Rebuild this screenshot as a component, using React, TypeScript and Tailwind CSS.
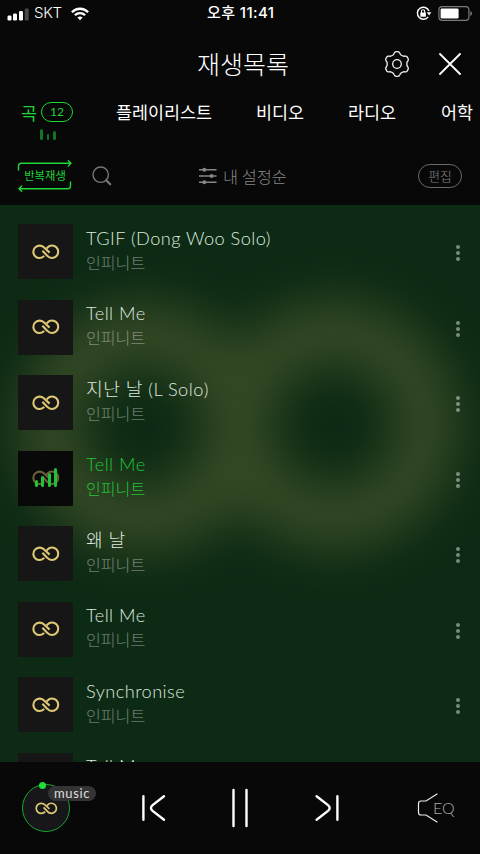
import React from "react";

const latin = "font-[Lato,'Noto_Sans_CJK_KR',sans-serif]";
const korean = "font-['Noto_Sans_CJK_KR',sans-serif]";
const system = "font-[Inter,'Noto_Sans_CJK_KR',sans-serif]";

type Track = { title: string; playing?: boolean };

const tracks: Track[] = [
  { title: "TGIF (Dong Woo Solo)" },
  { title: "Tell Me" },
  { title: "지난 날 (L Solo)" },
  { title: "Tell Me", playing: true },
  { title: "왜 날" },
  { title: "Tell Me" },
  { title: "Synchronise" },
  { title: "Tell Me" },
];

// Outline of a six-lobed cog centred on (14, 14), with one lobe pointing up.
const cogPath =
  "M" +
  Array.from({ length: 120 }, (_, i) => {
    const t = (i / 120) * Math.PI * 2;
    const r = 11.1 + 1.25 * (Math.tanh(1.7 * Math.cos(6 * t)) / Math.tanh(1.7));
    return `${(14 + r * Math.sin(t)).toFixed(2)} ${(14 - r * Math.cos(t)).toFixed(2)}`;
  }).join("L") +
  "Z";

function InfinityMark({ className }: { className: string }) {
  return (
    <svg viewBox="0 0 28 16" className={className} fill="none" stroke="#dfc873" strokeWidth="2.1">
      <path d="M12.2 11.9A6.2 6.2 0 1 1 11.8 3.3L17.6 8.6" />
      <path d="M10.4 6.7L15.4 11.9A6.2 6.2 0 1 0 15.5 3.5L14.6 4.4" />
    </svg>
  );
}

function StatusBar() {
  return (
    <div className={`flex h-[27px] shrink-0 items-center ${system} text-white`}>
      <svg className="ml-[7px] mt-px h-[13px] w-[22px]" viewBox="0 0 22 13">
        <rect x="0.5" y="7.5" width="4" height="5" rx="1.2" fill="#fff" />
        <rect x="6" y="5.5" width="4" height="7" rx="1.2" fill="#fff" />
        <rect x="12" y="3" width="4" height="9.5" rx="1.2" fill="#fff" />
        <rect x="17.7" y="0.5" width="4" height="12" rx="1.2" fill="#4a4a4a" />
      </svg>
      <span className="ml-[5px] w-[29px] whitespace-nowrap text-[15px] font-light tracking-[-0.3px]">SKT</span>
      <svg className="ml-[8px] h-[14px] w-[18px]" viewBox="0 0 18 14" fill="none" stroke="#fff" strokeWidth="2.3">
        <path d="M0.9 5.2C5.4 0.6 12.6 0.6 17.1 5.2" />
        <path d="M3.9 8.2C6.8 5.4 11.2 5.4 14.1 8.2" />
        <path d="M6.4 10.6Q9 8.6 11.6 10.6L9 13.3Z" fill="#fff" stroke="none" />
      </svg>
      <span className="ml-[118px] w-[72px] whitespace-nowrap text-[15px] font-medium tracking-[0.4px]">오후 11:41</span>
      <svg className="ml-[137px] h-[15px] w-[16px]" viewBox="0 0 16 15" fill="none" stroke="#fff">
        <path d="M13 5A6 6 0 1 0 12.2 10.9" strokeWidth="1.4" />
        <path d="M10.8 6.3H15.4L13.1 9.5Z" fill="#fff" stroke="none" />
        <rect x="4.3" y="6.5" width="5.6" height="4.3" rx="0.6" fill="#fff" stroke="none" />
        <path d="M5.5 7V5.3a1.6 1.6 0 0 1 3.2 0V7" strokeWidth="1.1" />
      </svg>
      <svg className="ml-[6px] h-[15px] w-[35px]" viewBox="0 0 35 15">
        <rect x="0.9" y="0.6" width="30" height="13.8" rx="3.3" fill="none" stroke="#7b7b7b" strokeWidth="1.2" />
        <rect x="2.6" y="2.4" width="18" height="10.2" rx="1.4" fill="#fff" />
        <path d="M32.3 5Q34 5.7 34 7.5T32.3 10Z" fill="#7b7b7b" />
      </svg>
    </div>
  );
}

function Header() {
  return (
    <header className="flex h-[73px] shrink-0 items-center text-white">
      <h1 className={`-mt-[2px] ml-[197px] w-[94px] whitespace-nowrap text-[25px] font-light leading-[36px] ${korean}`}>재생목록</h1>
      <svg className="ml-[92px] h-[28px] w-[28px]" viewBox="0 0 28 28" fill="none" stroke="#f4f4f4" strokeWidth="1.3" strokeLinejoin="round">
        <path d={cogPath} />
        <circle cx="14" cy="14" r="4.3" />
      </svg>
      <svg className="ml-[28px] h-[22px] w-[22px]" viewBox="0 0 22 22" stroke="#fff" strokeWidth="1.8" strokeLinecap="round">
        <path d="M1 1L21 21M21 1L1 21" />
      </svg>
    </header>
  );
}

function Tabs() {
  return (
    <nav className={`flex h-[47px] shrink-0 overflow-hidden whitespace-nowrap text-[17.4px] leading-[23px] text-white ${korean}`}>
      <div className="ml-[21px] w-[53px]">
        <div className="flex h-[24px] items-center text-[#1fd537]">
          <span>곡</span>
          <span className={`ml-[4px] flex h-[20px] w-[32px] shrink-0 items-center justify-center rounded-full border-[1.5px] border-[#1fd537] text-[12px] leading-none ${latin}`}>12</span>
        </div>
        <div className="ml-[19px] mt-[5px] flex h-[11px] items-end gap-[4px]">
          <i className="h-[11px] w-[2.5px] rounded-full bg-[#137424]" />
          <i className="h-[6px] w-[2.5px] rounded-full bg-[#137424]" />
          <i className="h-[9px] w-[2.5px] rounded-full bg-[#137424]" />
        </div>
      </div>
      <span className="ml-[42px] w-[97px]">플레이리스트</span>
      <span className="ml-[43px] w-[49px]">비디오</span>
      <span className="ml-[43px] w-[49px]">라디오</span>
      <span className="ml-[44px]">어학</span>
    </nav>
  );
}

function Toolbar() {
  return (
    <div className={`flex h-[58px] shrink-0 items-center text-[#777] ${korean}`}>
      <button className="ml-[17px] flex h-[32px] w-[56px] flex-col items-center justify-between text-[#1fd537]">
        <svg className="h-[11px] w-[56px] shrink-0" viewBox="0 0 56 11" fill="none" stroke="currentColor" strokeWidth="1.4" strokeLinecap="round" strokeLinejoin="round">
          <path d="M1.5 10V6Q1.5 3.3 4.2 3.3H54M51.3 0.7L54 3.3L51.3 5.9" />
        </svg>
        <span className="-mt-px h-[10px] whitespace-nowrap text-[11.3px] leading-[9px]">반복재생</span>
        <svg className="h-[11px] w-[56px] shrink-0" viewBox="0 0 56 11" fill="none" stroke="currentColor" strokeWidth="1.4" strokeLinecap="round" strokeLinejoin="round">
          <path d="M53.5 1V5Q53.5 7.7 50.8 7.7H2M4.7 5.1L2 7.7L4.7 10.3" />
        </svg>
      </button>
      <svg className="ml-[19px] h-[20px] w-[20px]" viewBox="0 0 20 20" fill="none" stroke="#777">
        <circle cx="8.7" cy="8.7" r="7.7" strokeWidth="1.4" />
        <path d="M14.2 14.2L18.2 18.2" strokeWidth="2.3" strokeLinecap="round" />
      </svg>
      <svg className="ml-[87px] h-[18px] w-[18px]" viewBox="0 0 18 18" stroke="#858585" strokeWidth="1.4">
        <path d="M0 2.7H17.5M0 9H17.5M0 15.3H17.5" />
        <g fill="#858585" stroke="none">
          <circle cx="5.3" cy="2.7" r="2" />
          <circle cx="12.6" cy="9" r="2" />
          <circle cx="5.3" cy="15.3" r="2" />
        </g>
      </svg>
      <span className="-mt-px ml-[6px] w-[66px] whitespace-nowrap text-[16.4px] font-light leading-[24px] text-[#858585]">내 설정순</span>
      <button className="ml-[129px] flex h-[24px] w-[44px] items-center justify-center rounded-full border border-[#6b6b6b] pb-px text-[12.8px] font-light leading-[18px] text-[#858585]">편집</button>
    </div>
  );
}

function TrackRow({ title, playing }: Track) {
  return (
    <li className="flex h-[55px] shrink-0">
      <div className={`relative ml-[18px] flex h-[55px] w-[55px] items-center justify-center ${playing ? "bg-[#090909]" : "bg-[#161617]"}`}>
        <InfinityMark className={`h-[16px] w-[28px] ${playing ? "opacity-45" : ""}`} />
        {playing && (
          <div className="absolute left-[17px] top-[17px] flex h-[19px] w-[22px] items-end gap-[3.8px]">
            <i className="h-[7px] w-[2.8px] rounded-full bg-[#1fc336]" />
            <i className="h-[11px] w-[2.8px] rounded-full bg-[#1fc336]" />
            <i className="h-[14px] w-[2.8px] rounded-full bg-[#1fc336]" />
            <i className="h-[19px] w-[2.8px] rounded-full bg-[#1fc336]" />
          </div>
        )}
      </div>
      <div className="ml-[13px] flex-1 pt-[1.5px]">
        <p className={`h-[24px] whitespace-nowrap text-[18.2px] font-light leading-[24px] tracking-[0.45px] ${latin} ${playing ? "text-[#1fc336]" : "text-[#dfe6df]"}`}>{title}</p>
        <p className={`h-[24px] text-[16.1px] font-light leading-[24px] ${korean} ${playing ? "text-[#1fc336]" : "text-white/40"}`}>인피니트</p>
      </div>
      <div className="mr-[20px] mt-[21px] flex h-[16px] w-[4.5px] flex-col justify-between">
        <i className="size-[4px] rounded-full bg-white/45" />
        <i className="size-[4px] rounded-full bg-white/45" />
        <i className="size-[4px] rounded-full bg-white/45" />
      </div>
    </li>
  );
}

function TrackList() {
  return (
    <main className="relative h-[557px] shrink-0 overflow-hidden bg-[#0d2a14]">
      <div className="absolute inset-0 blur-[24px]">
        <div className="absolute left-[18px] top-[97px] size-[250px] rounded-full border-[64px] border-[#344925]" />
        <div className="absolute left-[209px] top-[95px] size-[250px] rounded-full border-[64px] border-[#344925]" />
      </div>
      <ul className="relative flex flex-col gap-[20.5px] pt-[19px]">
        {tracks.map((track, i) => (
          <TrackRow key={i} {...track} />
        ))}
      </ul>
    </main>
  );
}

function Player() {
  return (
    <footer className="flex h-[92px] shrink-0 items-center text-white">
      <div className="relative ml-[22px] flex size-[48px] items-center justify-center rounded-full border-[1.5px] border-[#17a52b] bg-[#17161a]">
        <InfinityMark className="h-[13px] w-[23px]" />
        <i className="absolute left-[16px] top-[-3px] size-[7px] rounded-full bg-[#22dc3c]" />
        <span className={`absolute left-[25px] top-[0.5px] flex h-[15px] w-[48px] items-center justify-center rounded-full bg-[#343434] text-[13px] leading-none tracking-[0.6px] text-[#dedede] ${latin}`}>music</span>
      </div>
      <svg className="ml-[71px] h-[28px] w-[26px]" viewBox="0 0 26 28" fill="none" stroke="#fff" strokeWidth="2.4" strokeLinecap="round">
        <path d="M2.4 2.3V25.7M23 2.3L11.6 11.1Q8.3 14 11.6 16.9L23 25.7" />
      </svg>
      <svg className="ml-[63px] h-[40px] w-[20px]" viewBox="0 0 20 40" stroke="#fff" strokeWidth="2.4" strokeLinecap="round">
        <path d="M3.5 2V38M16.5 2V38" />
      </svg>
      <svg className="ml-[64px] h-[28px] w-[26px]" viewBox="0 0 26 28" fill="none" stroke="#fff" strokeWidth="2.4" strokeLinecap="round">
        <path d="M23.4 2.3V25.7M2.6 2.3L14 11.1Q17.3 14 14 16.9L2.6 25.7" />
      </svg>
      <div className="ml-[77px] flex items-center">
        <svg className="h-[30px] w-[21px] shrink-0" viewBox="0 0 21 30" fill="none" stroke="#eee" strokeWidth="1.2" strokeLinecap="round">
          <path d="M20 1L9 8H4Q1.5 8 1.5 10.5V19.5Q1.5 22 4 22H9L20 29" />
        </svg>
        <span className={`-ml-[5px] text-[16px] font-light leading-none text-[#aaa] ${latin}`}>EQ</span>
      </div>
    </footer>
  );
}

export default function App() {
  return (
    <div className="flex h-[854px] w-[480px] flex-col overflow-hidden bg-[#080808]">
      <StatusBar />
      <Header />
      <Tabs />
      <Toolbar />
      <TrackList />
      <Player />
    </div>
  );
}
